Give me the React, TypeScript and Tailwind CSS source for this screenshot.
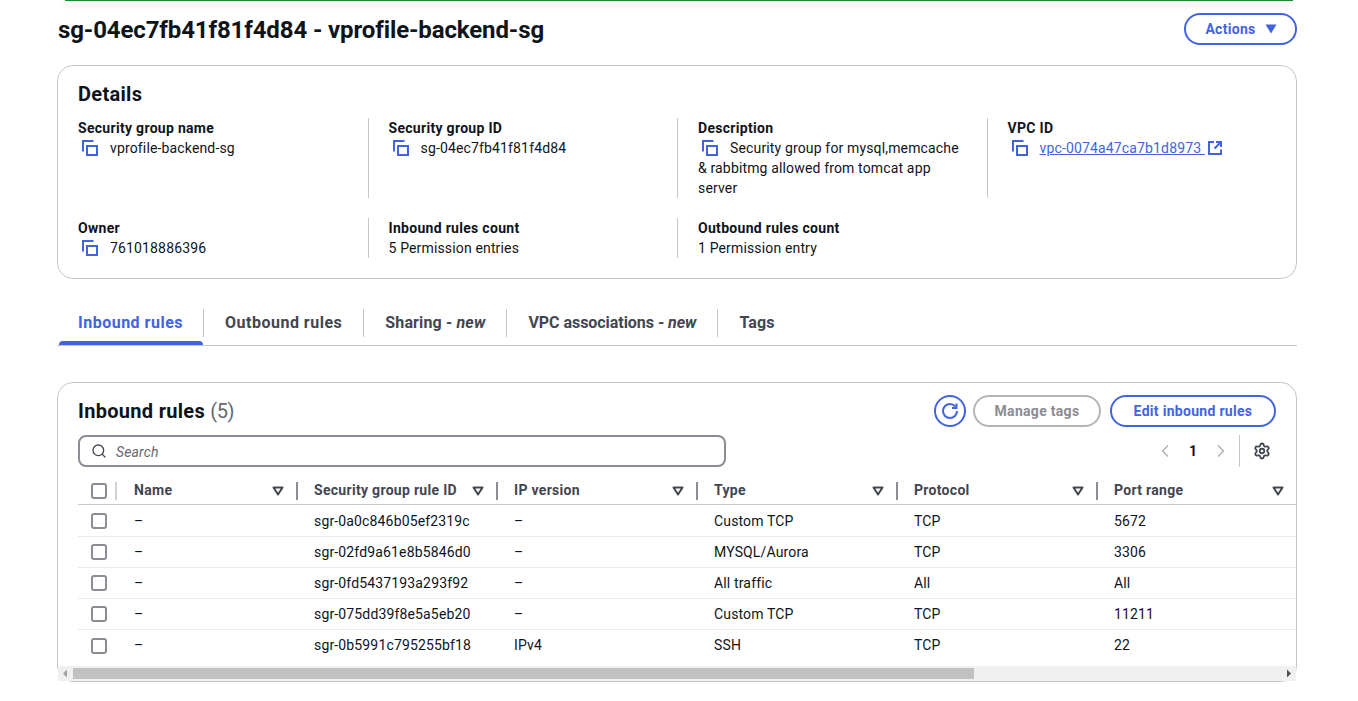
import { ChevronLeft, ChevronRight, Search, Settings } from 'lucide-react';

const BLUE = 'text-[#4263e0]';

function CopyIcon() {
  return (
    <svg width="16" height="16" viewBox="0 0 16 16" fill="none" stroke="#4263e0" strokeWidth="2" className="inline-block align-[-3px]">
      <path d="M1 11.5V1H11.5" />
      <rect x="5" y="6" width="10" height="9" />
    </svg>
  );
}

function ExternalIcon() {
  return (
    <svg width="14" height="14" viewBox="0 0 14 14" fill="none" stroke="#4263e0" strokeWidth="2" className="inline-block align-[-2px]">
      <path d="M6 1H1v12h12V8.5" />
      <path d="M8 1h5v5M12.5 1.5L6.5 7.5" />
    </svg>
  );
}

function SortIcon() {
  return (
    <svg width="12" height="10" viewBox="0 0 12 10" fill="none" stroke="#424650" strokeWidth="2" strokeLinejoin="round">
      <path d="M1.5 1.5h9L6 8.5z" />
    </svg>
  );
}

function Checkbox() {
  return <span className="block h-4 w-4 rounded-[3px] border-2 border-[#8c8c94] bg-white" />;
}

function Field({ label, children, divider }: { label: string; children: React.ReactNode; divider?: boolean }) {
  return (
    <div className={`relative ${divider ? 'pl-px' : ''}`}>
      {divider ? <span className="absolute -left-5 top-0 bottom-0 w-px bg-[#c6c6cd]" /> : null}
      <div className="font-bold leading-5 tracking-[0.3px]">{label}</div>
      <div className="leading-5">{children}</div>
    </div>
  );
}

function Copyable({ children }: { children: React.ReactNode }) {
  return (
    <>
      <span className="ml-1 mr-3"><CopyIcon /></span>
      {children}
    </>
  );
}

const TABS = [
  { label: 'Inbound rules', spacing: 'tracking-[0.5px]' },
  { label: 'Outbound rules', spacing: 'tracking-[0.5px]' },
  { label: 'Sharing', spacing: 'tracking-[0.15px]', isNew: true },
  { label: 'VPC associations', spacing: 'tracking-[-0.05px]', isNew: true },
  { label: 'Tags', spacing: 'tracking-[0.1px]' },
];

const COLUMNS = [
  { label: 'Name', width: 'w-[180px]' },
  { label: 'Security group rule ID', width: 'w-[200px]' },
  { label: 'IP version', width: 'w-[200px]' },
  { label: 'Type', width: 'w-[200px]' },
  { label: 'Protocol', width: 'w-[200px]' },
  { label: 'Port range', width: 'w-[200px]' },
];

const ROWS = [
  ['–', 'sgr-0a0c846b05ef2319c', '–', 'Custom TCP', 'TCP', '5672'],
  ['–', 'sgr-02fd9a61e8b5846d0', '–', 'MYSQL/Aurora', 'TCP', '3306'],
  ['–', 'sgr-0fd5437193a293f92', '–', 'All traffic', 'All', 'All'],
  ['–', 'sgr-075dd39f8e5a5eb20', '–', 'Custom TCP', 'TCP', '11211'],
  ['–', 'sgr-0b5991c795255bf18', 'IPv4', 'SSH', 'TCP', '22'],
];

export default function App() {
  return (
    <div className="h-[701px] w-[1358px] overflow-hidden bg-white font-['Roboto',sans-serif] text-[14px] tracking-[0.15px] text-[#0f141a]">
      <div className="mx-[65px] h-px bg-[#1a8a2e] shadow-[0_2px_8px_rgba(0,0,0,0.3)]" />

      <div className="ml-[57px] w-[1240px]">
        <header className="mt-3 flex h-8 items-center justify-between">
          <h1 className="pl-px pt-px text-[24px] font-bold leading-8 tracking-[-0.12px]">sg-04ec7fb41f81f4d84 - vprofile-backend-sg</h1>
          <button type="button" className={`flex h-8 w-[113px] items-center justify-center gap-[9px] rounded-full border-2 border-[#4263e0] pl-px font-bold tracking-[0.3px] ${BLUE}`}>
            Actions
            <svg width="12" height="10" viewBox="0 0 12 10" fill="#4263e0"><path d="M0.5 0.5h11L6 9.5z" /></svg>
          </button>
        </header>

        <section className="mt-5 h-[214px] rounded-2xl border border-[#c6c6cd] px-5 pt-4">
          <h2 className="text-[20px] font-bold leading-6 tracking-[0.3px]">Details</h2>
          <div className="mt-3 grid grid-cols-4 gap-x-10 gap-y-5">
            <div className="h-20"><Field label="Security group name"><Copyable>vprofile-backend-sg</Copyable></Field></div>
            <Field divider label="Security group ID"><Copyable>sg-04ec7fb41f81f4d84</Copyable></Field>
            <Field divider label="Description"><Copyable>Security group for mysql,memcache &amp; rabbitmg allowed from tomcat app server</Copyable></Field>
            <Field divider label="VPC ID">
              <Copyable>
                <a className="text-[#4263e0] underline" href="#">vpc-0074a47ca7b1d8973 </a>
              </Copyable>
              <span className="ml-[3px]"><ExternalIcon /></span>
            </Field>
            <Field label="Owner"><Copyable>761018886396</Copyable></Field>
            <Field divider label="Inbound rules count">5 Permission entries</Field>
            <Field divider label="Outbound rules count">1 Permission entry</Field>
          </div>
        </section>

        <nav className="relative mt-[26px] flex h-[41px] items-center border-b border-[#c6c6cd] pb-1 text-[16px] font-bold text-[#424650]">
          {TABS.map((tab, index) => (
            <div key={tab.label} className={`flex h-7 items-center ${tab.spacing} ${index < TABS.length - 1 ? 'border-r border-[#c6c6cd]' : ''} ${index === 0 ? `ml-px px-5 ${BLUE}` : 'px-[21px]'}`}>
              {tab.label}
              {tab.isNew ? <span className="ml-1">- <i>new</i></span> : null}
            </div>
          ))}
          <span className="absolute bottom-0 left-[2px] h-1 w-[144px] rounded-t-sm bg-[#4263e0]" />
        </nav>

        <section className="mt-[36px] h-[300px] rounded-2xl border border-[#c6c6cd]">
          <div className="flex items-center justify-between pl-5 pr-5 pt-3">
            <h2 className="text-[20px] font-bold leading-8 tracking-[0.3px]">
              Inbound rules <span className="font-normal tracking-[-0.5px] text-[#656871]">(5)</span>
            </h2>
            <div className="flex items-center font-bold tracking-[0.3px]">
              <button type="button" className="flex h-8 w-8 items-center justify-center rounded-full border-2 border-[#4263e0]">
                <svg width="16" height="16" viewBox="0 0 16 16" fill="none" stroke="#4263e0" strokeWidth="2">
                  <path d="M15 8a7 7 0 1 1-7-7c2.2 0 4 1 5.5 2.5" />
                  <path d="M14.5 0.5v4.5h-4.5" />
                </svg>
              </button>
              <button type="button" className="ml-[7px] h-8 w-[128px] rounded-full border-2 border-[#b4b4bb] font-bold text-[#8c8c94]">Manage tags</button>
              <button type="button" className={`ml-[9px] h-8 w-[166px] rounded-full border-2 border-[#4263e0] font-bold ${BLUE}`}>Edit inbound rules</button>
            </div>
          </div>

          <div className="mt-2 flex h-8 items-center pl-5">
            <div className="flex h-8 w-[648px] items-center rounded-lg border-2 border-[#8c8c94] pl-[11px]">
              <Search size={16} strokeWidth={2} className="text-[#424650]" />
              <span className="ml-[9px] pt-[2px] italic text-[#656871]">Search</span>
            </div>
            <ChevronLeft size={20} strokeWidth={2} className="ml-[429px] text-[#b4b4bb]" />
            <span className="ml-[14px] w-2 font-bold">1</span>
            <ChevronRight size={20} strokeWidth={2} className="ml-[14px] text-[#b4b4bb]" />
            <span className="ml-[8px] h-8 w-px bg-[#c6c6cd]" />
            <Settings size={18} strokeWidth={2.4} className="ml-[13px] text-[#424650]" />
          </div>

          <div className="ml-5 mt-[9px]">
            <div className="flex h-[29px] items-center border-b border-[#c6c6cd] pt-px font-bold tracking-[0.3px] text-[#424650]">
              <div className="flex w-10 shrink-0 items-center justify-between pl-[13px] pr-px">
                <Checkbox />
                <span className="h-[18px] w-[2px] bg-[#d1d1d5]" />
              </div>
              {COLUMNS.map((column) => (
                <div key={column.label} className={`flex shrink-0 items-center justify-between pl-4 ${column.width}`}>
                  {column.label}
                  <span className="flex items-center gap-3">
                    <SortIcon />
                    <span className={`h-[18px] w-[2px] ${column.label === 'Port range' ? '' : 'bg-[#8c8c94]'}`} />
                  </span>
                </div>
              ))}
            </div>
            {ROWS.map((row, rowIndex) => (
              <div key={row[1]} className={`flex items-center ${rowIndex === 0 ? 'h-8 pt-px' : 'h-[31px]'} ${rowIndex < ROWS.length - 1 ? 'border-b border-[#e9ebed]' : ''}`}>
                <div className="w-10 shrink-0 pl-[13px]"><Checkbox /></div>
                {row.map((cell, cellIndex) => (
                  <div key={cellIndex} className={`shrink-0 pl-4 ${COLUMNS[cellIndex].width}`}>{cell}</div>
                ))}
              </div>
            ))}
          </div>

          <div className="mt-[5px] flex h-[15px] items-center bg-[#f0f0f0]">
            <svg width="15" height="15" viewBox="0 0 15 15" fill="#a3a3a3"><path d="M5 7.5L9 3.5v8z" /></svg>
            <div className="h-[11px] w-[901px] bg-[#c1c1c1]" />
            <svg width="15" height="15" viewBox="0 0 15 15" fill="#505050" className="ml-auto"><path d="M10 7.5L6 3.5v8z" /></svg>
          </div>
        </section>
      </div>
    </div>
  );
}
